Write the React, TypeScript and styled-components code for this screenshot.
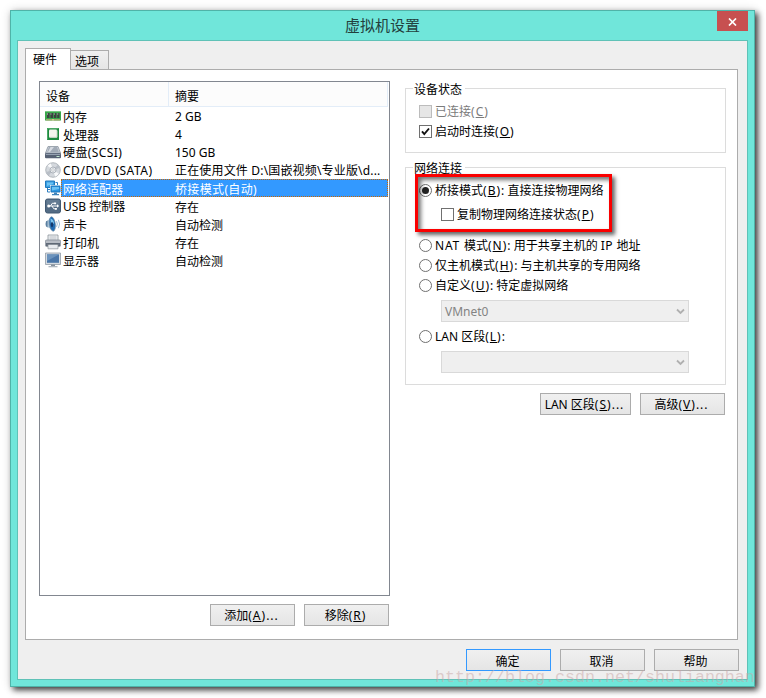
import React from 'react';
import styled, { createGlobalStyle } from 'styled-components';

const GlobalStyle = createGlobalStyle`
  * { box-sizing: border-box; }
  body {
    margin: 0;
    background: #fff;
    overflow: hidden;
    font-family: "Noto Sans", "Noto Sans CJK SC", sans-serif;
    font-size: 12px;
    color: #000;
  }
`;

const Desktop = styled.div`
  width: 766px;
  height: 698px;
  padding: 10px;
  background: #fff;
`;

const Window = styled.div`
  position: relative;
  width: 745px;
  height: 677px;
  padding: 0 6px 6px;
  border: 1px solid #4fb3a8;
  background: #70e6da;
  box-shadow: 3px 3px 6px rgba(0, 0, 0, 0.75), 0 0 10px rgba(0, 0, 0, 0.12);
`;

const TitleBar = styled.div`
  display: flex;
  align-items: flex-start;
  height: 29px;
`;

const Title = styled.h1`
  flex: 1;
  margin: 0 0 0 31px;
  font-size: 15px;
  font-weight: 400;
  line-height: 29px;
  text-align: center;
  color: #23403d;
`;

const CloseButton = styled.button`
  display: flex;
  align-items: center;
  justify-content: center;
  width: 31px;
  height: 20px;
  padding: 1px 0 0;
  border: 0;
  background: #c75050;
`;

const Client = styled.div`
  height: 640px;
  padding: 7px 9px 0 7px;
  border: 1px solid #5fc2b7;
  background: #efefef;
`;

const TabStrip = styled.div`
  display: flex;
  align-items: flex-end;
  height: 21px;
`;

const Tab = styled.div<{ $active?: boolean }>`
  position: relative;
  z-index: ${p => (p.$active ? 1 : 0)};
  width: ${p => (p.$active ? 46 : 39)}px;
  height: ${p => (p.$active ? 22 : 19)}px;
  margin: 0 ${p => (p.$active ? -1 : 0)}px ${p => (p.$active ? -1 : 0)}px 0;
  padding-left: ${p => (p.$active ? 7 : 4)}px;
  border: 1px solid #acacac;
  border-bottom: 0;
  background: ${p => (p.$active ? '#fff' : 'linear-gradient(#f0f0f0, #e5e5e5)')};
  line-height: ${p => (p.$active ? 21 : 21)}px;
`;

const TabPanel = styled.div`
  display: flex;
  gap: 15px;
  width: 713px;
  height: 571px;
  padding: 11px 11px 0 13px;
  border: 1px solid #acacac;
  background: #fff;
`;

const DeviceColumn = styled.section`
  width: 351px;
`;

const DeviceList = styled.div`
  height: 515px;
  padding: 0 1px 0 0;
  border: 1px solid #828790;
  background: #fff;
`;

const ListHeader = styled.div`
  display: flex;
  height: 25px;
  border-bottom: 1px solid #e3edf8;
  background: #fcfcfc;
  line-height: 29px;
`;

const HeaderCell = styled.div<{ $width: number }>`
  width: ${p => p.$width}px;
  padding-left: 6px;
  border-right: 1px solid #e3edf8;
`;

const DeviceRow = styled.div`
  display: flex;
  height: 18px;
  padding-left: 5px;
  line-height: 18px;
`;

const RowContent = styled.div<{ $selected?: boolean }>`
  display: flex;
  flex: 1;
  padding-left: 2px;
  background: ${p => (p.$selected ? '#3399ff' : 'transparent')};
  color: ${p => (p.$selected ? '#fff' : '#000')};
  outline: ${p => (p.$selected ? '1px dotted #cc6600' : 'none')};
  outline-offset: -1px;
`;

const Cell = styled.span<{ $width?: number; $gap?: number; $drop?: boolean }>`
  width: ${p => (p.$width ? `${p.$width}px` : 'auto')};
  padding-top: ${p => (p.$drop ? 2 : 1)}px;
  letter-spacing: ${p => p.$gap ?? 0}px;
  line-height: ${p => (p.$drop ? 17 : 18)}px;
  white-space: nowrap;
`;

const Spaced = styled.span<{ $gap: number }>`
  letter-spacing: ${p => p.$gap}px;
`;

const ButtonRow = styled.div<{ $top: number; $right?: number }>`
  display: flex;
  justify-content: flex-end;
  gap: 9px;
  margin: ${p => p.$top}px ${p => p.$right ?? 0}px 0 0;
`;

const Button = styled.button<{ $width?: number; $primary?: boolean; $low?: boolean }>`
  width: ${p => p.$width ?? 85}px;
  height: 22px;
  padding: ${p => (p.$low ? 3 : 2)}px 2px 0 0;
  border: 1px solid ${p => (p.$primary ? '#3399ff' : '#acacac')};
  background: linear-gradient(#f0f0f0, #e5e5e5);
  font: inherit;
  line-height: ${p => (p.$low ? 17 : 18)}px;
  color: #000;
  white-space: nowrap;
`;

const SettingsColumn = styled.section`
  width: 321px;
`;

const Group = styled.div<{ $top: number; $height: number }>`
  height: ${p => p.$height}px;
  margin: ${p => p.$top}px 0 0;
  padding: 0 0 0 13px;
  border: 1px solid #dcdcdc;
`;

const GroupTitle = styled.div`
  width: 52px;
  height: 16px;
  margin: -8px 0 0 -6px;
  padding-left: 1px;
  background: #fff;
  line-height: 17px;
  white-space: nowrap;
`;

const Option = styled.label<{ $indent?: boolean; $disabled?: boolean; $top?: number }>`
  display: flex;
  align-items: center;
  gap: 3px;
  height: 20px;
  margin: ${p => p.$top ?? 0}px 0 0 ${p => (p.$indent ? 22 : 0)}px;
  color: ${p => (p.$disabled ? '#7b7b7b' : '#000')};
  white-space: nowrap;
`;

const OptionText = styled.span`
  padding-top: 1px;
  line-height: 18px;
`;

const CheckSquare = styled.span<{ $disabled?: boolean }>`
  display: flex;
  width: 13px;
  height: 13px;
  border: 1px solid ${p => (p.$disabled ? '#bcbcbc' : '#707070')};
  background: ${p => (p.$disabled ? '#e6e6e6' : '#fff')};
`;

const RadioCircle = styled.span<{ $checked?: boolean }>`
  display: grid;
  place-items: center;
  width: 13px;
  height: 13px;
  border: 1px solid #707070;
  border-radius: 50%;
  background: #fff;
  &::after {
    content: '';
    width: 7px;
    height: 7px;
    border-radius: 50%;
    background: ${p => (p.$checked ? '#222' : 'transparent')};
  }
`;

const Select = styled.div<{ $top: number }>`
  display: flex;
  align-items: center;
  justify-content: space-between;
  width: 248px;
  height: 22px;
  margin: ${p => p.$top}px 0 0 22px;
  padding: 0 3px 0 3px;
  border: 1px solid #d9d9d9;
  background: #efefef;
  color: #838383;
`;

const Highlight = styled.div`
  position: absolute;
  left: 404px;
  top: 163px;
  width: 197px;
  height: 58px;
  border: 3px solid #fa0000;
  box-shadow: 3px 3px 4px rgba(0, 0, 0, 0.6), inset 3px 3px 4px rgba(0, 0, 0, 0.55);
  pointer-events: none;
`;

const Watermark = styled.div`
  position: absolute;
  left: 424px;
  top: 660px;
  height: 14px;
  font-family: "Liberation Mono", monospace;
  font-size: 16.66px;
  line-height: 14px;
  color: rgba(200, 165, 165, 0.5);
  white-space: nowrap;
  pointer-events: none;
`;

const Key = styled.span`
  text-decoration: underline;
  text-decoration-thickness: 1px;
  text-underline-offset: 1px;
  text-decoration-skip-ink: none;
`;

const IconBox = styled.svg`
  display: block;
  flex: none;
  width: 16px;
  height: 16px;
  margin-top: 1px;
`;

const Glyph = styled.svg`
  display: block;
  flex: none;
`;

const Chevron = () => (
  <Glyph width="9" height="7" viewBox="0 0 9 7">
    <path d="M1 1.5 4.5 5 8 1.5" fill="none" stroke="#b0b0b0" strokeWidth="1.8" />
  </Glyph>
);

const icons: Record<string, React.ReactNode> = {
  memory: (
    <>
      <path d="M0 3h16v9.5H0z" fill="#39a64b" />
      <path d="M0 3h16v1H0z" fill="#79c983" />
      <path d="M2 5h2.6v5H2zM5.4 5H8v5H5.4zM8.8 5h2.6v5H8.8zM12.2 5h2.3v5h-2.3z" fill="#3c4140" />
      <path d="M2 5h1v2H2zM5.4 5h1v2h-1zM8.8 5h1v2h-1zM12.2 5h1v2h-1z" fill="#858b88" />
      <path d="M1 11h14v1.5H1z" fill="#d4c58a" />
      <path d="M2 12.5V11M4 12.5V11M6 12.5V11M10 12.5V11M12 12.5V11M14 12.5V11" stroke="#39823f" strokeWidth=".7" />
    </>
  ),
  cpu: (
    <>
      <path d="M2 2h12v12H2z" fill="#1c8a3e" />
      <path d="M2.5 13.5v-11h11" fill="none" stroke="#4aa765" />
      <rect x="4" y="3.6" width="8" height="8" rx="1" fill="#f4f5ee" />
      <path d="M4.5 11.3H12V4.5" fill="none" stroke="#cfd8cb" />
    </>
  ),
  disk: (
    <>
      <path d="M3 2.5h10l2.5 6.5H.5z" fill="#cbd1d9" stroke="#8c95a1" strokeWidth=".8" />
      <path d="M4 3h8l1.8 5H2.2z" fill="#a2abb7" />
      <path d="M5.5 3H9L5 8H3z" fill="#d6dbe2" />
      <rect y="9" width="16" height="5.3" rx="1" fill="#566174" />
      <path d="M.8 9.8h14.4v1.2H.8z" fill="#94a0b0" />
      <path d="M11.5 12h3v1h-3z" fill="#c3e8cf" />
    </>
  ),
  disc: (
    <>
      <circle cx="8" cy="8" r="7.3" fill="#d4d8dd" stroke="#a5abb1" strokeWidth=".8" />
      <path d="M8 8 2.5 3.8A7 7 0 0 1 5.8 1.4zM8 8l5.8 3.8a7 7 0 0 1-3.6 2.8z" fill="#f9fafb" />
      <path d="M8 8 1.3 10a7 7 0 0 0 2.5 3.5zM8 8l6.7-2a7 7 0 0 0-2-3z" fill="#b8bec6" />
      <circle cx="8" cy="8" r="3" fill="#e9ecef" stroke="#989fa7" strokeWidth=".7" />
      <circle cx="8" cy="8" r="1.3" fill="#fff" stroke="#969da5" strokeWidth=".5" />
    </>
  ),
  network: (
    <>
      <path d="M.5 1h9v6.5h-9z" fill="#3a9fe2" stroke="#1f78bd" />
      <path d="M2 2.5h6v1.6L2 6z" fill="#6fc3f3" />
      <path d="M2.5 8v4h2.5M2 9.5h3M12.5 2.5h-2M12.5 2.5V5" fill="none" stroke="#2f7fc0" />
      <path d="M5.5 5.5h10v7h-10z" fill="#2791dc" stroke="#fff" />
      <path d="M6 6h9v6H6z" fill="#2b95e0" stroke="#1b72b8" strokeWidth=".9" />
      <path d="M7 7h7v2L7 10.5z" fill="#6cc1f3" />
      <path d="M9 12.5h3V14H9zM7 14h7v1.2H7z" fill="#3f84bb" />
    </>
  ),
  usb: (
    <>
      <rect x=".5" y="1" width="15" height="14" rx="2" fill="#536b84" stroke="#425a73" />
      <path d="M1.5 2h13v5.5h-13z" fill="#768ba0" opacity=".5" />
      <path d="M3 8h10M5.5 8l1.8-2.7H10M7 8l1.8 2.8H11" fill="none" stroke="#fff" />
      <circle cx="3.7" cy="8" r="1.5" fill="#fff" />
      <path d="M12 6.3 14.2 8 12 9.7zM9.2 4.4h1.9v1.8H9.2zM10 9.9h1.9v1.8H10z" fill="#fff" />
    </>
  ),
  sound: (
    <>
      <path d="M1 5.2 3 4.6v6.8l-2-.9Q0 8 1 5.2z" fill="#5b7f9f" />
      <path d="M2.5 4.8 7 .8l2 14.3-6.5-4z" fill="#a9c4d8" />
      <ellipse cx="7.3" cy="8" rx="3" ry="7.2" transform="rotate(-8 7.3 8)" fill="#1f6cb4" stroke="#6d8ba4" strokeWidth=".7" />
      <path d="M5.4 2.6Q8.6 3 9 7.4L6 8z" fill="#7cc4ee" />
      <ellipse cx="7" cy="8.6" rx="1.2" ry="2.6" fill="#12386b" />
      <path d="M11.5 5.2q1.6 2.8 0 5.6M13.4 3.8q2.4 4.2 0 8.4" fill="none" stroke="#8fb3d0" strokeWidth=".9" />
    </>
  ),
  printer: (
    <>
      <path d="M3 1h10v6H3z" fill="#f1f3f5" stroke="#8c939b" strokeWidth=".8" />
      <path d="M4.5 3h7M4.5 5h7" stroke="#b9bec5" />
      <rect x=".4" y="6" width="15.2" height="6.5" rx="1.2" fill="#b8bdc5" stroke="#7d8591" strokeWidth=".7" />
      <path d="M1 9h14v3H1z" fill="#616b7a" />
      <path d="M3 10h10v4.8H3z" fill="#e8ebef" stroke="#8b929a" strokeWidth=".7" />
      <path d="M3 10h10" stroke="#4e5967" />
    </>
  ),
  display: (
    <>
      <path d="M.5 1h15v11.5H.5z" fill="#d5dbe1" stroke="#929ca7" strokeWidth=".8" />
      <path d="M2 2.4h12v8.4H2z" fill="#4a76a8" />
      <path d="M2 2.4h12L2 9z" fill="#6b93bd" />
      <path d="M6 12.5h4V14H6z" fill="#87929e" />
      <path d="M3.5 14h9v1.3h-9z" fill="#aeb7c0" />
    </>
  ),
};

type Device = { icon: string; name: string; summary: string; selected?: boolean; gap?: number; summaryGap?: number };

const devices: Device[] = [
  { icon: 'memory', name: '内存', summary: '2 GB' },
  { icon: 'cpu', name: '处理器', summary: '4' },
  { icon: 'disk', name: '硬盘(SCSI)', summary: '150 GB', gap: 0.4 },
  { icon: 'disc', name: 'CD/DVD (SATA)', summary: '正在使用文件 D:\\国嵌视频\\专业版\\d...', gap: 0.54, summaryGap: 0.17 },
  { icon: 'network', name: '网络适配器', summary: '桥接模式(自动)', selected: true, summaryGap: 0.35 },
  { icon: 'usb', name: 'USB 控制器', summary: '存在' },
  { icon: 'sound', name: '声卡', summary: '自动检测' },
  { icon: 'printer', name: '打印机', summary: '存在' },
  { icon: 'display', name: '显示器', summary: '自动检测' },
];

const hasLatin = (text: string) => /[A-Za-z0-9]/.test(text);

const Shortcut = ({ k }: { k: string }) => (
  <Spaced $gap={1}>(<Key>{k}</Key>)</Spaced>
);

const Ellipsis = () => <Spaced $gap={1}>...</Spaced>;

export default function App() {
  return (
    <Desktop>
      <GlobalStyle />
      <Window>
        <TitleBar>
          <Title>虚拟机设置</Title>
          <CloseButton aria-label="关闭">
            <Glyph width="9" height="8" viewBox="0 0 9 8">
              <path d="M1 .5 8 7.5M8 .5 1 7.5" stroke="#fff" strokeWidth="1.7" />
            </Glyph>
          </CloseButton>
        </TitleBar>
        <Client>
          <TabStrip>
            <Tab $active>硬件</Tab>
            <Tab>选项</Tab>
          </TabStrip>
          <TabPanel>
            <DeviceColumn>
              <DeviceList>
                <ListHeader>
                  <HeaderCell $width={129}>设备</HeaderCell>
                  <HeaderCell $width={219}>摘要</HeaderCell>
                </ListHeader>
                {devices.map(d => (
                  <DeviceRow key={d.name}>
                    <IconBox viewBox="0 0 16 16">{icons[d.icon]}</IconBox>
                    <RowContent $selected={d.selected}>
                      <Cell $width={112} $gap={d.gap} $drop={!hasLatin(d.name)}>{d.name}</Cell>
                      <Cell $gap={d.summaryGap} $drop={!hasLatin(d.summary)}>{d.summary}</Cell>
                    </RowContent>
                  </DeviceRow>
                ))}
              </DeviceList>
              <ButtonRow $top={8} $right={1}>
                <Button>添加<Shortcut k="A" /><Ellipsis /></Button>
                <Button>移除<Shortcut k="R" /></Button>
              </ButtonRow>
            </DeviceColumn>
            <SettingsColumn>
              <Group $top={7} $height={65}>
                <GroupTitle>设备状态</GroupTitle>
                <Option $disabled $top={4}>
                  <CheckSquare $disabled />
                  <OptionText>已连接<Shortcut k="C" /></OptionText>
                </Option>
                <Option>
                  <CheckSquare>
                    <Glyph width="11" height="11" viewBox="0 0 11 11">
                      <path d="M2 5.3 4.3 8 9 2.5" fill="none" stroke="#111" strokeWidth="1.9" />
                    </Glyph>
                  </CheckSquare>
                  <OptionText>启动时连接<Shortcut k="O" /></OptionText>
                </Option>
              </Group>
              <Group $top={14} $height={218}>
                <GroupTitle>网络连接</GroupTitle>
                <Option $top={4}>
                  <RadioCircle $checked />
                  <OptionText>桥接模式<Shortcut k="B" />: 直接连接物理网络</OptionText>
                </Option>
                <Option $indent $top={4}>
                  <CheckSquare />
                  <OptionText>复制物理网络连接状态<Shortcut k="P" /></OptionText>
                </Option>
                <Option $top={11}>
                  <RadioCircle />
                  <OptionText><Spaced $gap={0.8}>NAT </Spaced>模式<Shortcut k="N" />: 用于共享主机的 <Spaced $gap={0.4}>IP </Spaced>地址</OptionText>
                </Option>
                <Option>
                  <RadioCircle />
                  <OptionText>仅主机模式<Shortcut k="H" />: 与主机共享的专用网络</OptionText>
                </Option>
                <Option>
                  <RadioCircle />
                  <OptionText>自定义<Shortcut k="U" />: 特定虚拟网络</OptionText>
                </Option>
                <Select $top={5}>VMnet0<Chevron /></Select>
                <Option $top={4}>
                  <RadioCircle />
                  <OptionText>LAN 区段<Shortcut k="L" />:</OptionText>
                </Option>
                <Select $top={5}><span /><Chevron /></Select>
              </Group>
              <ButtonRow $top={8} $right={1}>
                <Button $width={91}>LAN 区段<Shortcut k="S" /><Ellipsis /></Button>
                <Button>高级<Shortcut k="V" /><Ellipsis /></Button>
              </ButtonRow>
            </SettingsColumn>
          </TabPanel>
          <ButtonRow $top={9} $right={-1}>
            <Button $primary $low>确定</Button>
            <Button $low>取消</Button>
            <Button $low>帮助</Button>
          </ButtonRow>
        </Client>
        <Highlight />
        <Watermark>http://blog.csdn.net/shulianghan</Watermark>
      </Window>
    </Desktop>
  );
}
